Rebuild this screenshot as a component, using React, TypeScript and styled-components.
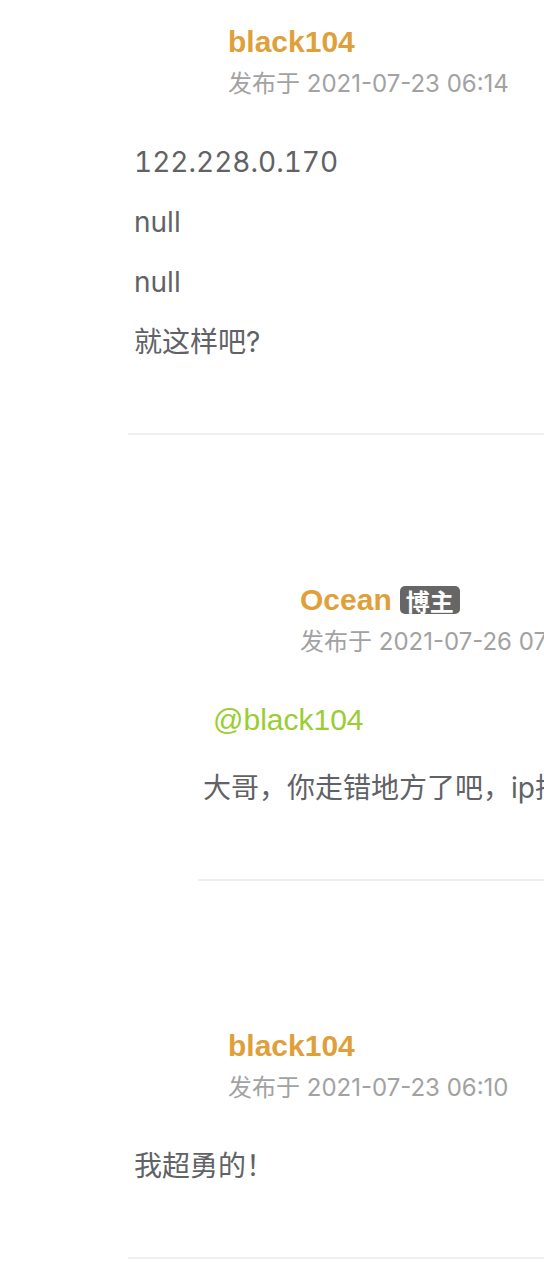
import React from 'react'
import styled, { createGlobalStyle } from 'styled-components'

const GlobalStyle = createGlobalStyle`
  html, body {
    margin: 0;
    padding: 0;
    background: #ffffff;
    overflow: hidden;
  }
  body {
    font-family: 'Liberation Sans', 'Noto Sans CJK SC', sans-serif;
  }
`

const Page = styled.div`
  width: 544px;
  height: 1282px;
  overflow: hidden;
  padding-top: 21px;
  box-sizing: border-box;
`

const Comment = styled.div<{ $indent: number; $gap: number }>`
  margin-left: ${({ $indent }) => $indent}px;
  padding-top: ${({ $gap }) => $gap}px;
  padding-bottom: 61px;
  border-bottom: 2px solid #efefef;
  white-space: nowrap;
`

const Meta = styled.div<{ $pad: number }>`
  padding-left: ${({ $pad }) => $pad}px;
`

const NameRow = styled.div`
  display: flex;
  align-items: center;
  gap: 8px;
  height: 42px;
`

const Name = styled.span`
  font-size: 30px;
  font-weight: bold;
  color: #dfa03a;
`

const Badge = styled.span`
  display: inline-flex;
  align-items: center;
  justify-content: center;
  height: 28px;
  padding: 0 6px;
  border-radius: 5px;
  background: #666666;
  color: #ffffff;
  font-size: 24px;
  font-weight: bold;
  font-family: 'Noto Sans CJK SC', sans-serif;
`

const Date = styled.div`
  font-family: Inter, 'Noto Sans CJK SC', sans-serif;
  font-size: 24px;
  line-height: 42px;
  color: #a2a2a2;
`

const Body = styled.div`
  margin-top: 27px;
  display: flex;
  flex-direction: column;
`

const Line = styled.p<{ $pad: number }>`
  margin: 0;
  padding-left: ${({ $pad }) => $pad}px;
  font-family: Inter, 'Noto Sans CJK SC', sans-serif;
  font-feature-settings: 'tnum';
  font-size: 28px;
  line-height: 60px;
  color: #606266;
`

const Mention = styled.a`
  display: block;
  padding-left: 15px;
  margin-bottom: 8px;
  font-size: 30px;
  line-height: 60px;
  color: #9acd32;
  text-decoration: none;
`

type Item = {
  name: string
  owner?: boolean
  date: string
  reply?: string
  lines: string[]
  indent: number
  gap: number
}

const comments: Item[] = [
  {
    name: 'black104',
    date: '发布于 2021-07-23 06:14',
    lines: ['122.228.0.170', 'null', 'null', '就这样吧?'],
    indent: 128,
    gap: 0,
  },
  {
    name: 'Ocean',
    owner: true,
    date: '发布于 2021-07-26 07:32',
    reply: '@black104',
    lines: ['大哥，你走错地方了吧，ip拦截不到的'],
    indent: 198,
    gap: 144,
  },
  {
    name: 'black104',
    date: '发布于 2021-07-23 06:10',
    lines: ['我超勇的！'],
    indent: 128,
    gap: 144,
  },
]

export default function App() {
  return (
    <Page>
      <GlobalStyle />
      {comments.map((c, i) => (
        <Comment key={i} $indent={c.indent} $gap={c.gap}>
          <Meta $pad={c.reply ? 102 : 100}>
            <NameRow>
              <Name>{c.name}</Name>
              {c.owner && <Badge>博主</Badge>}
            </NameRow>
            <Date>{c.date}</Date>
          </Meta>
          <Body>
            {c.reply && <Mention href="#">{c.reply}</Mention>}
            {c.lines.map((l, j) => (
              <Line key={j} $pad={c.reply ? 5 : 6}>
                {l}
              </Line>
            ))}
          </Body>
        </Comment>
      ))}
    </Page>
  )
}
